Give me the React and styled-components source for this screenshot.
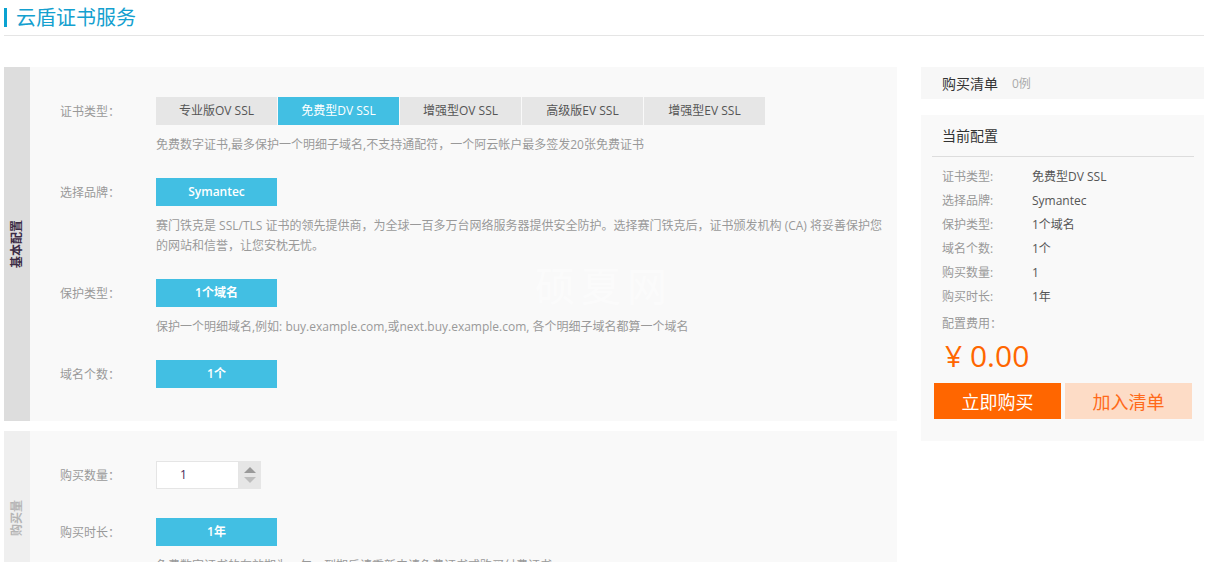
import React from "react";
import styled, { createGlobalStyle } from "styled-components";

const GlobalStyle = createGlobalStyle`
  body {
    margin: 0;
    background: #fff;
    font-family: "Open Sans", "Noto Sans CJK SC", sans-serif;
    color: #333;
  }
`;

const Page = styled.div`
  padding: 0 6px 0 4px;
  width: 1200px;
`;

const Header = styled.div`
  display: flex;
  align-items: center;
  height: 35px;
  border-bottom: 1px solid #e5e5e5;
`;

const TitleBar = styled.span`
  width: 3px;
  height: 19px;
  background: #0aa2d1;
  margin-right: 9px;
`;

const Title = styled.h1`
  margin: 0;
  font-size: 20px;
  font-weight: normal;
  color: #14a0cf;
  line-height: 24px;
`;

const Body = styled.div`
  display: flex;
  gap: 24px;
  margin-top: 31px;
  align-items: flex-start;
`;

const Main = styled.div`
  width: 893px;
`;

const Section = styled.section`
  position: relative;
  display: flex;
  background: #f9f9f9;
  margin-top: ${(p) => (p.$first ? 0 : "10px")};
`;

const Strip = styled.div`
  width: 26px;
  flex-shrink: 0;
  background: ${(p) => (p.$muted ? "#efefef" : "#dddddd")};
  display: flex;
  align-items: center;
  justify-content: center;
`;

const StripText = styled.span`
  writing-mode: vertical-rl;
  text-orientation: sideways;
  transform: rotate(180deg);
  font-size: 12px;
  font-weight: bold;
  line-height: 14px;
  color: ${(p) => (p.$muted ? "#b5b5b5" : "#3a2a44")};
`;

const Content = styled.div`
  flex: 1;
  padding: 30px 8px ${(p) => p.$bottom || "33px"} 30px;
`;

const Row = styled.div`
  display: flex;
  align-items: flex-start;
  margin-top: ${(p) => p.$gap || "0"};
`;

const Label = styled.div`
  width: 96px;
  height: 28px;
  flex-shrink: 0;
  font-size: 12px;
  line-height: 30px;
  color: #999;
`;

const Control = styled.div`
  flex: 1;
`;

const Tabs = styled.div`
  display: flex;
  gap: 1px;
`;

const Tab = styled.div`
  width: 121px;
  height: 28px;
  line-height: 28px;
  text-align: center;
  font-size: 12px;
  background: ${(p) => (p.$active ? "#42bfe3" : "#e6e6e6")};
  color: ${(p) => (p.$active ? "#fff" : "#555")};
`;

const Choice = styled.div`
  width: 121px;
  height: 28px;
  line-height: 28px;
  text-align: center;
  font-size: 12px;
  font-weight: 600;
  background: #42bfe3;
  color: #fff;
`;

const Desc = styled.p`
  margin: 10px 0 0;
  font-size: 12px;
  line-height: 20px;
  color: #999;
`;

const Watermark = styled.div`
  position: absolute;
  left: 531px;
  top: 188px;
  font-size: 40px;
  letter-spacing: 6px;
  color: rgba(255, 255, 255, 0.45);
  pointer-events: none;
`;

const Stepper = styled.div`
  display: flex;
`;

const NumberBox = styled.div`
  width: 81px;
  height: 26px;
  border: 1px solid #e5e5e5;
  background: #fff;
  font-size: 12px;
  line-height: 26px;
  text-indent: 23px;
  color: #4a2a5a;
`;

const Spin = styled.div`
  width: 22px;
  height: 28px;
  background: #e6e6e6;
  display: flex;
  flex-direction: column;
  align-items: center;
  justify-content: center;
  gap: 4px;
`;

const Arrow = styled.span`
  width: 0;
  height: 0;
  border-left: 6px solid transparent;
  border-right: 6px solid transparent;
  ${(p) =>
    p.$up
      ? "border-bottom: 6px solid #9a9a9a;"
      : "border-top: 6px solid #bdbdbd;"}
`;

const Aside = styled.aside`
  width: 283px;
`;

const Cart = styled.div`
  height: 32px;
  background: #f7f7f7;
  display: flex;
  align-items: center;
  padding-left: 21px;
  gap: 14px;
`;

const CartTitle = styled.span`
  font-size: 14px;
  color: #333;
`;

const CartCount = styled.span`
  font-size: 12px;
  color: #aaa;
`;

const Config = styled.div`
  margin-top: 16px;
  background: #f9f9f9;
  padding-bottom: 22px;
`;

const ConfigTitle = styled.div`
  padding: 11px 21px 10px;
  font-size: 14px;
  line-height: 20px;
  color: #333;
`;

const Divider = styled.div`
  height: 1px;
  background: #dddddd;
  margin: 0 10px 0 11px;
`;

const Items = styled.div`
  padding: 8px 21px 0;
`;

const Item = styled.div`
  display: flex;
  font-size: 12px;
  line-height: 24px;
`;

const ItemLabel = styled.span`
  width: 90px;
  color: #999;
`;

const ItemValue = styled.span`
  color: #555;
`;

const FeeLabel = styled.div`
  margin-top: 3px;
  font-size: 12px;
  line-height: 24px;
  color: #999;
`;

const Price = styled.div`
  margin-top: 4px;
  padding-left: 3px;
  font-size: 30px;
  line-height: 32px;
  color: #ff6600;
`;

const Actions = styled.div`
  display: flex;
  gap: 4px;
  margin-top: 11px;
  padding: 0 12px 0 13px;
`;

const ActionButton = styled.button`
  width: 127px;
  height: 36px;
  border: none;
  padding: 0;
  font-family: inherit;
  font-size: 18px;
  background: ${(p) => (p.$primary ? "#ff6600" : "#fddcc6")};
  color: ${(p) => (p.$primary ? "#fff" : "#ff6a1a")};
  cursor: pointer;
`;

const certTypes = ["专业版OV SSL", "免费型DV SSL", "增强型OV SSL", "高级版EV SSL", "增强型EV SSL"];

const summary = [
  ["证书类型:", "免费型DV SSL"],
  ["选择品牌:", "Symantec"],
  ["保护类型:", "1个域名"],
  ["域名个数:", "1个"],
  ["购买数量:", "1"],
  ["购买时长:", "1年"],
];

export default function App() {
  return (
    <Page>
      <GlobalStyle />
      <Header>
        <TitleBar />
        <Title>云盾证书服务</Title>
      </Header>
      <Body>
        <Main>
          <Section $first>
            <Strip>
              <StripText>基本配置</StripText>
            </Strip>
            <Content>
              <Row>
                <Label>证书类型：</Label>
                <Control>
                  <Tabs>
                    {certTypes.map((t, i) => (
                      <Tab key={t} $active={i === 1}>
                        {t}
                      </Tab>
                    ))}
                  </Tabs>
                  <Desc>免费数字证书,最多保护一个明细子域名,不支持通配符，一个阿云帐户最多签发20张免费证书</Desc>
                </Control>
              </Row>
              <Row $gap="23px">
                <Label>选择品牌：</Label>
                <Control>
                  <Choice>Symantec</Choice>
                  <Desc>
                    赛门铁克是 SSL/TLS 证书的领先提供商，为全球一百多万台网络服务器提供安全防护。选择赛门铁克后，证书颁发机构 (CA) 将妥善保护您
                    <br />
                    的网站和信誉，让您安枕无忧。
                  </Desc>
                </Control>
              </Row>
              <Row $gap="23px">
                <Label>保护类型：</Label>
                <Control>
                  <Choice>1个域名</Choice>
                  <Desc>保护一个明细域名,例如: buy.example.com,或next.buy.example.com, 各个明细子域名都算一个域名</Desc>
                </Control>
              </Row>
              <Row $gap="23px">
                <Label>域名个数：</Label>
                <Control>
                  <Choice>1个</Choice>
                </Control>
              </Row>
            </Content>
            <Watermark>硕夏网</Watermark>
          </Section>
          <Section>
            <Strip $muted>
              <StripText $muted>购买量</StripText>
            </Strip>
            <Content $bottom="30px">
              <Row>
                <Label>购买数量：</Label>
                <Control>
                  <Stepper>
                    <NumberBox>1</NumberBox>
                    <Spin>
                      <Arrow $up />
                      <Arrow />
                    </Spin>
                  </Stepper>
                </Control>
              </Row>
              <Row $gap="29px">
                <Label>购买时长：</Label>
                <Control>
                  <Choice>1年</Choice>
                  <Desc>免费数字证书的有效期为一年，到期后请重新申请免费证书或购买付费证书</Desc>
                </Control>
              </Row>
            </Content>
          </Section>
        </Main>
        <Aside>
          <Cart>
            <CartTitle>购买清单</CartTitle>
            <CartCount>0例</CartCount>
          </Cart>
          <Config>
            <ConfigTitle>当前配置</ConfigTitle>
            <Divider />
            <Items>
              {summary.map(([k, v]) => (
                <Item key={k}>
                  <ItemLabel>{k}</ItemLabel>
                  <ItemValue>{v}</ItemValue>
                </Item>
              ))}
              <FeeLabel>配置费用：</FeeLabel>
              <Price>¥ 0.00</Price>
            </Items>
            <Actions>
              <ActionButton $primary>立即购买</ActionButton>
              <ActionButton>加入清单</ActionButton>
            </Actions>
          </Config>
        </Aside>
      </Body>
    </Page>
  );
}
